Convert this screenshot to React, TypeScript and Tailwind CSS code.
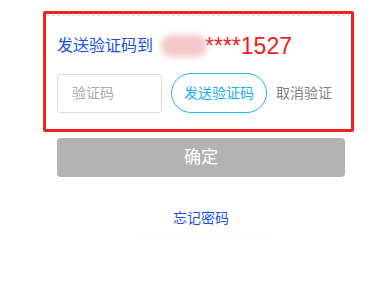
import React from "react";

export default function App() {
  return (
    <div
      className="w-[389px] h-[305px] bg-white overflow-hidden"
      style={{ fontFamily: '"Liberation Sans", "Noto Sans CJK SC", sans-serif' }}
    >
      <div className="pt-[11px] pl-[43px]">
        <div className="w-[311px] h-[121px] border-[3px] border-[#f2211c] rounded-[2px]">
          <div className="mx-[1px] mt-[1px] border-t border-dashed border-[#d9d9d9]" />
          <div className="flex items-center pl-[11px] mt-[15px] h-[30px]">
            <span className="text-[16px] text-[#2052e3]">发送验证码到</span>
            <span className="ml-[8px] w-[46px] h-[22px] rounded-full bg-[#f4c7cb] blur-[3px]" />
            <span className="text-[23px] leading-none text-[#e8221c] -ml-[2px]">****1527</span>
          </div>
          <div className="flex items-center pl-[11px] mt-[12px]">
            <div className="w-[105px] h-[39px] border border-[#dcdcdc] rounded-[3px] flex items-center pl-[14px] text-[14px] text-[#aaaaaa]">
              验证码
            </div>
            <div className="ml-[9px] w-[96px] h-[40px] border border-[#22b4f2] rounded-full flex items-center justify-center text-[14px] text-[#19aef0]">
              发送验证码
            </div>
            <span className="ml-[9px] text-[14px] text-[#808080]">取消验证</span>
          </div>
        </div>
      </div>
      <div className="pl-[57px] mt-[6px]">
        <div className="w-[288px] h-[39px] bg-[#b3b3b3] rounded-[4px] flex items-center justify-center text-[17px] text-white">
          确定
        </div>
      </div>
      <div className="mt-[31px] flex justify-center pl-[13px]">
        <span className="text-[14px] text-[#2052e3]">忘记密码</span>
      </div>
      <div className="mt-[4px] ml-[137px] w-[130px] border-t border-dotted border-[#eeeeee]" />
    </div>
  );
}
